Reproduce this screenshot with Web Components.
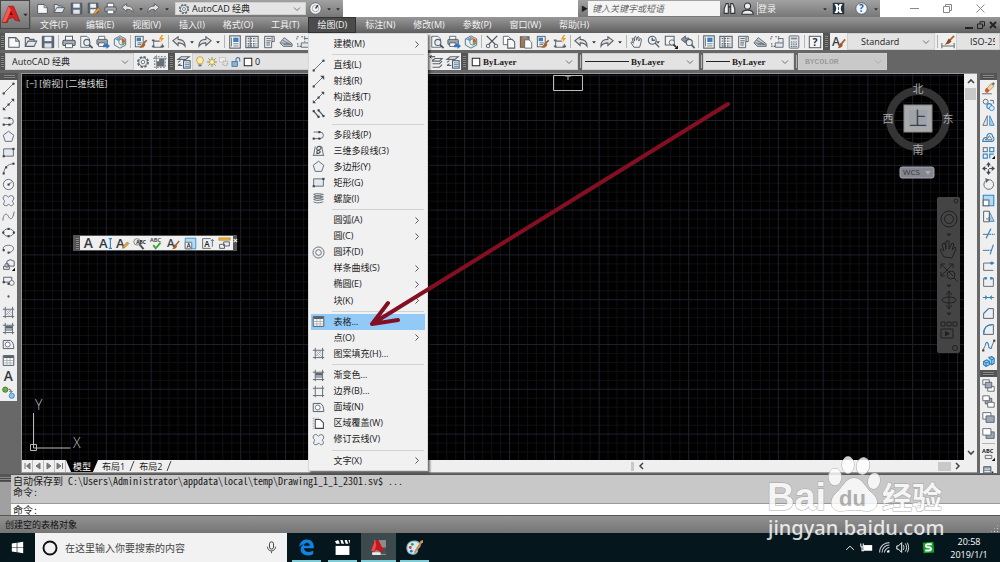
<!DOCTYPE html>
<html lang="zh-CN">
<head>
<meta charset="utf-8">
<title>AutoCAD 经典</title>
<style>
html,body{margin:0;height:100%;background:#686868}
body{font:9px/12px "Open Sans","Noto Sans CJK SC",sans-serif;color:#1a1a1a;overflow:hidden}
</style>
</head>
<body>
<cad-app></cad-app>
<script>
const G='fill="none" stroke="#656d77" stroke-width="1.2"';
const B='fill="none" stroke="#2f86c8" stroke-width="1.4"';
const dot=(x,y,c='#3a4048')=>`<rect x="${x-1.2}" y="${y-1.2}" width="2.6" height="2.6" fill="${c}"/>`;
const T=(s,x,y,z,c='#333',w=400)=>`<text x="${x}" y="${y}" font-size="${z}" fill="${c}" font-weight="${w}" font-family="Open Sans,sans-serif">${s}</text>`;
const ICONS={
 'new':`<path d="M2 3h8l4 4v7H2z" fill="#f8f8f8" stroke="#555e68" stroke-width="1.2"/><path d="M10 3v4h4" ${G}/>`,
 open:`<path d="M1.500 13V3h4l1 2h5v2M1.500 13l3-6h10l-3 6z" fill="#e4e8ec" stroke="#555e68" stroke-width="1.2"/>`,
 save:`<path d="M1.500 1.500h13v13h-13z" fill="#5b6a7b" stroke="#444e5a"/><path d="M4 2h8v5H4z" fill="#eef2f5"/><path d="M4 9.500h8v5H4z" fill="#dfe4e8"/>`,
 saveas:`<path d="M1.500 1.500h12v12h-12z" fill="#5b6a7b" stroke="#444e5a"/><path d="M4 2h7v5H4zM4 9h7v5H4z" fill="#eef2f5"/><path d="M8 15l1-3 5-5 2 2-5 5z" fill="#e8a23a" stroke="#8a5a1a" stroke-width=".6"/>`,
 print:`<path d="M4 6V1.500h8V6" fill="#fff" stroke="#555e68" stroke-width="1.2"/><rect x="1" y="6" width="14" height="6" rx="1.500" fill="#a5acb4" stroke="#4d5660" stroke-width="1.2"/><path d="M4 10h8v4.500H4z" fill="#fff" stroke="#4d5660"/>`,
 preview:`<path d="M2 1.500h7l3 3V14H2z" fill="#f6f6f6" stroke="#59616b"/><circle cx="9" cy="8.500" r="3.500" fill="#e2edf5" stroke="#59616b" stroke-width="1.2"/><path d="M11.500 11l4 4" stroke="#4b535c" stroke-width="2"/>`,
 publish:`<path d="M3 5V1.500h7V5" fill="#fff" stroke="#59616b"/><rect x="1" y="5" width="12" height="6" rx="1" fill="#9aa3ac" stroke="#4d5660"/><path d="M3 9h7v4H3z" fill="#fff" stroke="#4d5660"/><path d="M8 11h4V9l4 3.500-4 3.500v-2H8z" fill="#2f78c8"/>`,
 cube:`<path d="M8 1l6.500 3.500v7L8 15l-6.500-3.500v-7z" fill="#dceef8" stroke="#596873"/><path d="M8 2v6L2 5z" fill="#5aa7d8"/><path d="M8 2v6l6-3z" fill="#e0a44a"/><path d="M2 5l6 3v6z" fill="#fff"/><circle cx="10" cy="8" r="3.500" fill="#f2f2f2" stroke="#777"/><path d="M10 4.500A3.500 3.500 0 0113.500 8H10z" fill="#d9534a"/><path d="M13.500 8a3.500 3.500 0 01-3.500 3.500V8z" fill="#62b04e"/>`,
 match:`<rect x="1.500" y="1.500" width="9" height="12" fill="#eef3f7" stroke="#4f5963"/><rect x="3" y="3" width="5" height="4" fill="#3a7fc0"/><path d="M4 9h5M4 11h4" stroke="#59616b"/><path d="M14.500 6l-4 4" stroke="#9a5a26" stroke-width="2"/><path d="M11 8.500l2 2c-1 4-4 4-7 4 2-1 2-4 5-6z" fill="#a9642c"/>`,
 block:`<path d="M3 7h7M3 7v7h10V10" ${G}/><path d="M1 6h3M1 13h3M11 13h4" stroke="#59616b" stroke-width="2"/><path d="M12 0l-3 5h2.500l-1 4 4.500-5.500h-3l2-3.500z" fill="#eda022"/>`,
 undo:`<path d="M1 6.500L7 2v3c5 0 8 2 8 8-2-3-4-4-8-4v3z" fill="#e2e2e2" stroke="#5b6168" stroke-width="1.200"/>`,
 redo:`<path d="M15 6.500L9 2v3c-5 0-8 2-8 8 2-3 4-4 8-4v3z" fill="#e2e2e2" stroke="#5b6168" stroke-width="1.200"/>`,
 props:`<rect x="2" y="1" width="12" height="14" fill="#f5f7f9" stroke="#4f5963" stroke-width="1.200"/><rect x="6" y="3" width="6" height="5" fill="#3d7fbf"/><path d="M4 3v10M6 10h6M6 12.500h6" stroke="#68727c"/>`,
 design:`<rect x="1" y="1.500" width="14" height="13" fill="#f5f7f9" stroke="#4f5963" stroke-width="1.200"/><path d="M3 4h10M3 7h10M3 10h10M3 12.500h10" stroke="#66707a" stroke-width="1.600" stroke-dasharray="2 1"/><path d="M6 2v12" stroke="#59616b"/>`,
 palette:`<path d="M3 1.500h11v6h-3v7H3z" fill="#e8eaec" stroke="#4f5963"/><path d="M5 4h5M5 6.500h5M5 9h4M5 11.500h4M11.500 2v5" stroke="#67717b" stroke-width="1.200"/>`,
 sheet:`<path d="M1 9l5-6 9 7v3H5z" fill="#c8ced4" stroke="#59616b"/><path d="M2 9l10 1M4 6l10 5M5 11h9" stroke="#68727c"/>`,
 markup:`<path d="M1 5V2h3M6 2h4v6M2 9v4h4" ${G} stroke-dasharray="2 1"/><path d="M6 9h9v5H6zM9 4h6v5" fill="#e4e8ec" stroke="#59616b"/>`,
 calc:`<rect x="2.500" y="1" width="11" height="14" rx="1" fill="#e4e7ea" stroke="#59616b"/><rect x="4.500" y="3" width="7" height="2" fill="#818b95"/><path d="M4.500 8h7M4.500 10.500h7M4.500 13h7" stroke="#66707a" stroke-width="1.400" stroke-dasharray="1.600 1"/>`,
 help:`<rect x="1.500" y="1.500" width="13" height="13" fill="#f6f6f6" stroke="#59616b" stroke-width="1.200"/>`+T('?',5,13,12,'#25313d',700),
 qmark:`<circle cx="8" cy="8" r="7" fill="#f1f6fb" stroke="#4b5764"/>`+T('?',5,12.5,12,'#2166b0',700),
 cut:`<path d="M2 1l10 10M14 1L4 11" stroke="#4b535c" stroke-width="1.600"/><circle cx="3.500" cy="12.500" r="2" ${G}/><circle cx="12.500" cy="12.500" r="2" ${G}/>`,
 copydoc:`<path d="M1.500 1.500h6l2 2V11h-8z" fill="#fff" stroke="#59616b"/><path d="M6.500 5h5l3 3v7h-8z" fill="#f8f8f8" stroke="#59616b" stroke-width="1.200"/>`,
 paste:`<rect x="1.500" y="2" width="10" height="12" fill="#a07a58" stroke="#5a4a3d"/><rect x="4" y="1" width="5" height="3" fill="#8a929a"/><path d="M6.500 5.500h5l3 3v6.500h-8z" fill="#fff" stroke="#59616b"/>`,
 pan:`<path d="M4.500 14L1 8.500c1-1.500 2 0 3 1L2.500 4c1-1.500 2 0 2.500 3l.5-5c1-1.300 2 0 2 4l1.500-4c1.500-.5 1.500 1 1 5l2-3c1.500 0 1 2 .5 4.500L11 14z" fill="#f3f3f3" stroke="#59616b" stroke-width="1.100"/>`,
 zoomrt:`<circle cx="6" cy="6" r="4.500" fill="#e8f0f5" stroke="#59616b" stroke-width="1.200"/><path d="M6 3v3h3M9 9l5 5" fill="none" stroke="#59616b" stroke-width="1.600"/><path d="M10 7h5l-2.500 3z" fill="#59616b"/>`,
 zoomwin:`<path d="M1.500 1.500h10v10h-10z" fill="#f4f4f4" stroke="#59616b" stroke-width="1.200"/><circle cx="9" cy="8.500" r="3" fill="#e8f0f5" stroke="#59616b"/><path d="M11 11l3 3" stroke="#333" stroke-width="2"/><path d="M16 12v4h-4z" fill="#111"/>`,
 zoomprev:`<path d="M0 5l5-4v2.500h4v3H5V9z" fill="#8a949e" stroke="#59616b"/><circle cx="9.500" cy="8.500" r="3.500" fill="#e8f0f5" stroke="#59616b" stroke-width="1.200"/><path d="M12 11l3.500 4" stroke="#59616b" stroke-width="2"/>`,
 gear:`<circle cx="8" cy="8" r="5.500" fill="#f5f5f5" stroke="#5e6871" stroke-width="2.600" stroke-dasharray="2.600 1.700"/><circle cx="8" cy="8" r="4.800" fill="#eceff1" stroke="#5e6871"/><circle cx="8" cy="8" r="2" fill="#fff" stroke="#5e6871"/>`,
 wsgear:`<path d="M2 2h12v12H2z" ${G} stroke-dasharray="2 1.500"/><path d="M4 13V7h3V4h6v9z" fill="#66707c"/><path d="M0 4h16M4 0v16" stroke="#777" stroke-width=".7"/>`,
 layers:`<path d="M1 5l4-3h9l-4 3zM1 8.500l3-2M1 12l3-2M1 12h5" fill="#f4f4f4" stroke="#59616b" stroke-width="1.200"/><rect x="7.500" y="6.500" width="7.500" height="8.500" fill="#eef2f5" stroke="#4d5660" stroke-width="1.200"/><path d="M9 9h5M9 11h5M9 13h5" stroke="#417fb5"/>`,
 layerprev:`<path d="M4 6l3-2h8l-3 3H4zM4 10h8l3-3M4 14h8l3-3" fill="none" stroke="#59616b" stroke-width="1.300"/><path d="M7 2H1M3 0L1 2l2 2" stroke="#222" fill="none"/>`,
 bulb:`<path d="M5 11c0-2-2.500-3-2.500-6a5.500 5.500 0 0111 0c0 3-2.500 4-2.500 6z" fill="#ffe9a0" stroke="#a08232"/><path d="M5.500 12h5v3h-5z" fill="#68727c"/>`,
 sun:`<path d="M8 0v16M0 8h16M2 2l12 12M14 2L2 14" stroke="#8d8249" stroke-width="1.300"/><circle cx="8" cy="8" r="4" fill="#fff0a8" stroke="#9a8330"/>`,
 freeze:`<rect x="1" y="1" width="9" height="7" fill="#eee" stroke="#bbb"/><circle cx="10" cy="10" r="4" fill="#ddd" stroke="#b0b0b0" stroke-width="2" stroke-dasharray="2 1"/>`,
 lock:`<path d="M8 7V4a3 3 0 016 0v3" fill="none" stroke="#50749a" stroke-width="1.800"/><rect x="1.500" y="7" width="9" height="8" fill="#7fb4e0" stroke="#36597c"/>`,
 swatch:`<rect x="2" y="2" width="12" height="12" fill="#fff" stroke="#222" stroke-width="1.600"/>`,
 textstyle:T('A',0,12,14,'#38424c',600)+`<path d="M15 5l-5 6" stroke="#a9642c" stroke-width="2"/><path d="M9.500 9l3 2c-1 3-3 4-6 4 2-2 1-4 3-6z" fill="#a35c28"/>`,
 dimstyle:`<path d="M1 9v6M15 9v6M1 12.500h14" ${G}/><path d="M15 1L9 7" stroke="#a9642c" stroke-width="2"/><path d="M9 4l3 3c-2 3-4 3-8 4 3-2 3-5 5-7z" fill="#8a4c25"/>`,
 line:`<path d="M2 14L14 2" ${G}/>${dot(2,14)}${dot(14,2)}`,
 xline:`<path d="M2 14L14 2" ${G}/><path d="M11 1h4v4zM5 15H1v-4z" fill="#444b53"/>${dot(8,8)}`,
 ray:`<path d="M2 14L14 2" ${G}/><path d="M10 1h5v5z" fill="#444b53"/>${dot(2,14)}`,
 mline:`<path d="M2 5l6 7M8 4l6 7" stroke="#59616b" stroke-width="1.500"/>${dot(2,5)}${dot(8,4)}${dot(14,11)}${dot(8,12)}`,
 pline:`<path d="M2 5h8a4 4 0 010 8H2" ${G}/>${dot(2,13)}${dot(9,5)}${dot(9,13)}`,
 pline3:`<path d="M2 14L4 3M14 14L12 3M1 14h14" ${G}/><path d="M5 12c5 0 7-3 3-4s-2-5 1-5 3 3 0 4-5 3-1 5" fill="none" stroke="#4d555d" stroke-width="1.400"/>`,
 polygon:`<path d="M8 1.500l6.500 5L12 14H4L1.500 6.500z" fill="#eceff3" stroke="#656d77" stroke-width="1.200"/>`,
 rect:`<path d="M2 3.500h12v9H2z" fill="#e4e8ee" stroke="#656d77" stroke-width="1.200"/>${dot(2,12.5)}${dot(14,3.5)}`,
 arc:`<path d="M2 14C3 6 7 3 14 2" ${G}/>${dot(2,14)}${dot(5,6.5)}${dot(14,2)}`,
 circle:`<circle cx="8" cy="8" r="6.300" fill="#f1f2f4" stroke="#656d77" stroke-width="1.200"/><path d="M8 8l4-3" ${G}/>${dot(8,8)}`,
 cloud:`<path d="M3 8C0 6 1.500 1 5.500 2 7 3 7.500 4 8 4c1-2.500 6-3 6.500 1 0 2-1.500 3-2 4 2 1 2.500 5-1 5.500-2 0-2.500-2-3.500-2-1 2-5.500 3-6 0 0-2 1.500-2.500 1-4.500z" fill="#eceff3" stroke="#656d77" stroke-width="1.200"/>`,
 spline:`<path d="M1 13C2 3 6 4 8 8s5 5 7-6" ${G}/>`,
 ellipse:`<ellipse cx="8" cy="8" rx="6.500" ry="4.500" fill="#f4f4f4" stroke="#656d77" stroke-width="1.200"/>${dot(8,3.5)}${dot(8,12.5)}${dot(1.5,8)}${dot(14.5,8)}`,
 earc:`<path d="M2 10C0 6 4 4 8 4s7 2 6 5-4 4-6 4" ${G}/>${dot(8,13)}${dot(2,10)}`,
 insert:`<path d="M2 10v4h7v-4zM6 8V4l4-2 5 2v6h-5z" fill="#eceff3" stroke="#59616b" stroke-width="1.200"/><circle cx="6" cy="9" r="2.500" ${G}/><path d="M16 12v4h-4z" fill="#111"/>`,
 make:`<path d="M2 4h10v6H2z" fill="#eceff3" stroke="#59616b" stroke-width="1.200"/><circle cx="12" cy="11" r="3" fill="#f2f2f2" stroke="#59616b"/>${dot(2,10)}${dot(8,12)}`,
 point:`<circle cx="8" cy="8" r="1.400" fill="#555"/>`,
 hatch:`<path d="M4 1v14M1 4h14M1 13h14M13 1v14" ${G}/><path d="M5 5l7 7M5 8l4 4M8 5l4 4M5 11l6-6" stroke="#a0a8b0"/>`,
 gradient:`<path d="M4 5h9v3H4z" fill="#59616b"/><path d="M4 8h9v3H4z" fill="#a0a7af"/><path d="M4 1v14M1 4h14M1 13h14M13 1v14" ${G}/>`,
 boundary:`<path d="M4 1v14M1 4h14M1 13h14M13 1v14" ${G}/>`,
 region:`<path d="M1.500 3h9c3 2 4 5 4 10h-13z" fill="#eceff3" stroke="#59616b" stroke-width="1.200"/><circle cx="7" cy="8" r="3" fill="#fff" stroke="#59616b"/>`,
 table:`<path d="M1.500 2h13v12h-13z" fill="#fff" stroke="#4d5660" stroke-width="1.200"/><path d="M2 2h12v3H2z" fill="#59616b"/><path d="M2 8h12M2 11h12M6 5v9M10 5v9" stroke="#a0a7ae"/>`,
 mtext:T('A',2,14,17,'#333a42',600),
 addsel:`<circle cx="4" cy="4.500" r="3.200" fill="#69ad42" stroke="#3c7423"/><circle cx="12" cy="12" r="3.200" fill="#8cc8ef" stroke="#3383bb"/><path d="M8 4c3 0 3 1 3 3M9 6l2 2 2-2" fill="none" stroke="#333"/>`,
 helix:`<path d="M2 3c4 3 12 0 12 0M2 6c4 3 12 0 12 0M2 9c4 3 12 0 12 0M2 12c4 3 12 0 12 0M2 3c4-2 12 0 12 0M2 6c4-2 12 0 12 0M2 9c4-2 12 0 12 0" ${G}/>`,
 donut:`<circle cx="8" cy="8" r="6.800" ${G}/><circle cx="8" cy="8" r="3.500" ${G}/>`,
 wipe:`<path d="M4 3h6l4 4v7H4z" fill="#fff" stroke="#3d454d" stroke-width="1.300"/><path d="M1.500 1.500v13M1.500 1.500h8" stroke="#888" stroke-dasharray="1 1"/>`,
 erase:`<path d="M15 1L8 8" stroke="#777" stroke-width="3"/><path d="M11 2l4 3-6 6-3-3z" fill="#f0d49c" stroke="#8a7a60" stroke-width=".7"/><path d="M6 7l3 3c-1 4-4 4-5 2s0-4 2-5z" fill="#d8572d"/><path d="M0 14.500h12" ${G}/>`,
 copy:`<circle cx="4.500" cy="4.500" r="3" ${G}/><circle cx="9" cy="10" r="3" ${B}/><circle cx="12" cy="12.500" r="3" fill="#dcecf8" stroke="#2f86c8"/><path d="M10 3h4v4" ${G}/>`,
 mirror:`<path d="M6.500 2v12H1z" fill="#e4e8ec" stroke="#59616b"/><path d="M9.500 2v12H15z" fill="#a8d0ee" stroke="#2f86c8"/>`,
 offset:`<path d="M1 14c0-4 3-5 5-5 0-6 7-6 7-1 3 2 2 6-1 6z" ${B}/><path d="M4 12h8c1-2-1-2-2-3 0-3-2-2-2 0 0 2-3 1-4 3z" ${G}/>`,
 array:`<rect x="1.500" y="2" width="5" height="5" ${G}/><rect x="9.500" y="2" width="5" height="5" ${B}/><rect x="1.500" y="10" width="5" height="5" ${B}/><path d="M9.500 15v-5h5" ${B}/><path d="M16 12v4h-4z" fill="#111"/>`,
 move:`<path d="M8 2v12M2 8h12" stroke="#444b53" stroke-width="1.500" stroke-dasharray="4 3"/><path d="M8 0l3 4H5zM8 16l3-4H5zM0 8l4-3v6zM16 8l-4-3v6z" fill="#444b53"/>`,
 rotate:`<path d="M5 3a6 6 0 103-1" ${G}/><path d="M4 0l5 2-4 4z" fill="#59616b"/>`,
 scale:`<path d="M1.500 1.500h13v13h-13z" fill="#b3dbf3" stroke="#2f86c8" stroke-width="1.300"/><path d="M1.500 7.500h7v7h-7z" fill="#fff" stroke="#59616b" stroke-width="1.300"/>`,
 stretch:`<path d="M9 2l6 12H9z" fill="#a8d0ee" stroke="#2f86c8"/><path d="M2 1.500h7v13H2z" fill="#f5f5f5" stroke="#59616b" stroke-width="1.200"/><path d="M5 11h5M8 9l2 2-2 2" ${G}/>`,
 trim:`<path d="M5 14L11 2" ${B}/><path d="M1 9h7" ${G}/><path d="M9 9h7" ${B} stroke-dasharray="2 1"/>`,
 extend:`<path d="M10 14L14 2" ${B}/><path d="M1 9h6" ${G}/><path d="M7 9h5" ${B} stroke-dasharray="2 1"/>`,
 breakpt:`<path d="M2 14V5h9M2 14h12" ${G}/><path d="M10 5h5" ${B}/><circle cx="12" cy="5" r="2" fill="#2f86c8"/>`,
 brk:`<path d="M5 4H2v10h12V4h-3" ${G}/><path d="M3 4h3M10 4h3" fill="none" stroke="#2f86c8" stroke-width="3"/>`,
 join:`<path d="M1 8h14" ${G}/><path d="M4 5l3 3-3 3zM12 5L9 8l3 3z" fill="#2f86c8"/>`,
 chamfer:`<path d="M2 14V8l6-6h6v12z" fill="#eceff3" stroke="#59616b" stroke-width="1.200"/><path d="M2 8l6-6" ${B}/>`,
 fillet:`<path d="M2 14c0-8 3-12 12-12v12z" fill="#eceff3" stroke="#59616b" stroke-width="1.200"/><path d="M2 14C2 6 5 2 13 2" ${B}/>`,
 blend:`<path d="M1 14l3-6M15 2l-3 7" ${G}/><path d="M4 8C5 1 8 5 8 8s4 6 4 1" ${B}/>${dot(1.500,14)}${dot(15,2)}`,
 explode:`<path d="M2 8l4-2 3 2v4l-4 2-3-2zM8 3l4-1 3 2v6l-3 2-3-2" fill="#a8d0ee" stroke="#2578b4" stroke-width="1.300"/><path d="M2 8l3 2 4-2M5 10v4M8 3l4 3 3-2M12 6v6" ${B}/>`,
 front:`<path d="M1 1h8v6H1zM7 9h8v6H7z" fill="#fff" stroke="#4d5660"/><path d="M4 4h8v7H4z" fill="#9fa9b6" stroke="#4d5660"/>`,
 back:`<path d="M4 4h8v7H4z" fill="#9fa9b6" stroke="#4d5660"/><path d="M1 1h8v6H1zM7 9h8v6H7z" fill="#fff" stroke="#4d5660"/>`,
 above:`<path d="M1 2h10v8H1z" fill="#fff" stroke="#4d5660"/><path d="M5 6h10v8H5z" fill="#9fa9b6" stroke="#4d5660"/>`,
 under:`<path d="M5 6h10v8H5z" fill="#9fa9b6" stroke="#4d5660"/><path d="M1 2h10v8H1z" fill="#fff" stroke="#4d5660"/>`,
 abcfront:T('ABC',0,6,7,'#222',700)+`<path d="M4 9h8v4H4z" ${G}/><path d="M16 12v4h-4z" fill="#111"/>`,
 hatchback:`<path d="M2 2h9v11H2z" fill="#8c99a8" stroke="#4d5660"/><path d="M3 5h7M3 8h7" stroke="#fff"/><path d="M13 8v5" stroke="#222" stroke-width="2"/>`,
 dtext:T('A',0,14,16,'#333a42',600)+`<path d="M14 2v12M12 2h4M12 14h4" ${B}/>`,
 edittext:T('A',0,14,16,'#333a42',600)+`<path d="M8 14l1-3 5-5 2 2-5 5z" fill="#e8a23a" stroke="#8a5a1a" stroke-width=".6"/>`,
 find:`<circle cx="5" cy="6" r="4" fill="#e3efe9" stroke="#68757c"/><path d="M8 9l5 6" stroke="#4b535c" stroke-width="2.500"/>`+T('ABC',4,8,6,'#222',700),
 spell:T('ABC',0,6,7,'#333',600)+`<path d="M4 10l3 4 6-7" fill="none" stroke="#39a335" stroke-width="2.200"/>`,
 scaletext:`<path d="M1.500 1.500h13v13h-13z" fill="#b3dbf3" stroke="#2f86c8"/><path d="M1.500 6.500h8v8h-8z" fill="#fff" stroke="#59616b"/>`+T('A',3,13.5,8,'#222',600),
 justify:`<path d="M12 14H2V2h10" ${G}/>`+T('A',4,12,10,'#222',600)+`<path d="M14 3v9M12 5l2-2 2 2" ${G}/>`,
 convert:`<path d="M1 1h14v3H1z" fill="#f0b43c" stroke="#a87820" stroke-width=".7"/><path d="M2 9h6v5H2zM7 6h7v5H7z" fill="#eceff3" stroke="#59616b" stroke-width="1.200"/>`,
 bino:`<path d="M1.500 14V8L4 2h2.500v12zM14.500 14V8L12 2H9.500v12z" fill="#f0f0f0" stroke="#30353a" stroke-width="1.300"/><path d="M6.500 6h3" stroke="#30353a" stroke-width="2"/>`,
 user:`<circle cx="8" cy="5" r="3.800" fill="#eee" stroke="#30353a" stroke-width="1.300"/><path d="M1 15c0-4 3-5 7-5s7 1 7 5z" fill="#eee" stroke="#30353a" stroke-width="1.300"/>`,
 xchg:`<path d="M1 1h14v14H1z" fill="#24313f"/><path d="M3 2.500c3 4 3 7 0 11h3.500L8 11l1.500 2.500H13c-3-4-3-7 0-11H9.500L8 5 6.500 2.500z" fill="#fff"/><path d="M8 6v4" stroke="#24313f"/>`,
 compass:`<circle cx="8" cy="8" r="7" fill="#f3f4f5" stroke="#59616b"/><circle cx="8" cy="8" r="4" fill="none" stroke="#999"/><path d="M8 8l3-4" stroke="#333" stroke-width="1.600"/>`,
 logo:`<path d="M1 14L6 1h4l5 12-4-1-1-2-4 1-1 3z" fill="#d92222" stroke="#861014" stroke-width=".5"/><path d="M6 1L1 14l3-1 4-9z" fill="#f15b50"/><path d="M7 8l1-3 1.500 3z" fill="#580d0d"/>`,
 win:`<path d="M1 3.200l6-.9v5.300H1zM7.800 2.200L15 1v6.600H7.800zM1 8.400h6v5.300l-6-.9zM7.800 8.400H15V15l-7.200-1.100z" fill="#fff"/>`,
 cortana:`<circle cx="8" cy="8" r="6.500" fill="none" stroke="#111" stroke-width="1.900"/>`,
 mic:`<rect x="5.500" y="1" width="5" height="9" rx="2.500" fill="none" stroke="#444" stroke-width="1.200"/><path d="M3 7c0 7 10 7 10 0M8 12.500V15" fill="none" stroke="#444" stroke-width="1.100"/>`,
 edge:`<path d="M1 7.500C2 2 5.500.5 8.300.5c4.200 0 6.900 3 6.700 8.300H5.500c.2 3.700 5.600 4.200 8.700 2.300v3.200c-5 2.500-11.700 1-11.700-4.600 0-2.500 1.500-4.200 3.500-5C4 5 2 6 1 7.500zM5.600 6.300h5.500C11 2.500 6 2.700 5.600 6.300z" fill="#0c84e0"/>`,
 clap:`<path d="M1.500 6.500h13v8.500h-13z" fill="#fff"/><path d="M1 2l3-1 1.500 3.500H2zM6 1h2l1.500 3.500H7zM10 1h2l1.500 3.500H11zM13.500 1H15v3.500z" fill="#fff"/>`,
 acad:`<path d="M4 1h11v14H4z" fill="#8d8d8d"/><path d="M9 8h6v6H9z" fill="#4c4c4c"/><path d="M1 11L5 1h3l5 10-3 1-4-2-2 2z" fill="#c8151c"/><path d="M5 1L1 11l3 1 2-6z" fill="#ee4a44"/><path d="M2 12.500h8V15H2z" fill="#eee"/>`,
 paint:`<path d="M1 10C0 5 4 1 9 2s5 5 3 6 0 3-2 5-8 2-9-3z" fill="#d7e9f4" stroke="#80b0cc"/><circle cx="4" cy="8" r="1.300" fill="#d23b2d"/><circle cx="6" cy="5" r="1.300" fill="#3d9c3a"/><circle cx="5" cy="11.500" r="1.300" fill="#2878c8"/><path d="M15 2L8 13" stroke="#d48b3a" stroke-width="1.800"/><path d="M13 2l3-1v3z" fill="#cf9b56"/>`,
 chevup:`<path d="M2 11l6-6 6 6" fill="none" stroke="#fff" stroke-width="1.500"/>`,
 battery:`<path d="M4 5h11v7H4z" fill="#fff"/><path d="M1 3v3c0 2 3 2 3 0V3M2.500 7v5H5" fill="none" stroke="#fff" stroke-width="1.300"/>`,
 wifi:`<path d="M2 14C2 6 8 2 14 2M5 14c0-5 4-9 9-9M8 14c0-3 3-6 6-6" fill="none" stroke="#ccd" stroke-width="1.300"/><path d="M11 14c0-2 1-3 3-3v3z" fill="#fff"/>`,
 sound:`<path d="M1 6h2l4-4v12l-4-4H1z" fill="none" stroke="#fff" stroke-width="1.200"/><path d="M9 5c1 2 1 4 0 6M11.500 3c2 3 2 7 0 10M14 2c2 4 2 8 0 12" fill="none" stroke="#fff"/>`,
 sogou:`<path d="M1 2l13-1 1 13-13 1z" fill="#12a32a"/><path d="M12 4H7c-3 0-3 3.500 0 3.700h2c3 0 3 4-.500 4H4" fill="none" stroke="#fff" stroke-width="2.200"/>`,
 tri:`<path d="M3 6h10l-5 6z" fill="#2b2b2b"/>`,
 down:`<path d="M2 5l6 6 6-6" fill="none" stroke="#555" stroke-width="1.600"/>`
};

/* Registers an element whose shadow root is cloned from a template. */
function define(name, render){
  customElements.define(name, class extends HTMLElement{
    constructor(){ super(); this.attachShadow({mode:'open'}); }
    connectedCallback(){
      const t=document.createElement('template');
      t.innerHTML=render(this);
      this.shadowRoot.replaceChildren(t.content.cloneNode(true));
    }
  });
}
const BTN='button{all:unset;box-sizing:border-box;display:flex;align-items:center;justify-content:center;cursor:default}';

define('cad-icon', e=>`<style>:host{display:inline-flex;flex:none;width:var(--icon,14px);height:var(--icon,14px)}svg{width:100%;height:100%;overflow:visible}</style>
<svg viewBox="0 0 16 16" aria-hidden="true">${ICONS[e.getAttribute('name')]||''}</svg>`);

define('tool-button', e=>`<style>:host{display:flex;flex:none;width:17px;justify-content:center}:host([small]){width:9px;--icon:6px}${BTN}button{width:100%;height:100%}</style>
<button aria-label="${e.getAttribute('name')}"><cad-icon name="${e.getAttribute('name')}"></cad-icon></button>`);

define('tool-grip', e=>`<style>:host{display:flex;flex:none;width:7px;align-self:stretch;background:#555;align-items:center;justify-content:center}i{width:3px;height:11px;background:repeating-linear-gradient(#888 0 1px,#484848 1px 2px)}
:host([flat]){width:auto;height:7px}:host([flat]) i{width:11px;height:4px}</style><i></i>`);

define('tool-sep', e=>`<style>:host{display:flex;flex:none;width:4px;justify-content:center;align-items:stretch}i{width:1px;background:#b4b4b4;margin:2px 0}:host([flat]){width:auto;height:5px}:host([flat]) i{width:13px;height:1px;margin:2px auto}</style><i></i>`);

/* Drop-down list with an optional slotted swatch before the value. */
define('tool-select', e=>`<style>:host{display:flex;min-width:0;box-sizing:border-box;background:#e3e3e3;border:1px solid #cfcfcf;--icon:10px}
label{display:flex;flex:1;align-items:center;min-width:0;padding:0 4px 0 6px;gap:2px}:host([swatch]) label{padding-left:2px}:host([wide]) label{padding-left:13px}
select{all:unset;flex:1;min-width:0;font:inherit;white-space:nowrap;overflow:hidden}
.c{--icon:8px;display:flex}:host([disabled]){background:#c9c9c9;color:#888}:host([disabled]) .c{opacity:.3}</style>
<label><slot></slot><select aria-label="${e.getAttribute('label')}" ${e.hasAttribute('disabled')?'disabled':''}><option>${e.getAttribute('value')}</option></select>${e.hasAttribute('nochev')?'':'<span class="c"><cad-icon name="down"></cad-icon></span>'}</label>`);

define('tool-strip', e=>`<style>:host{display:flex;flex:none;height:17px;background:#efefef}:host([vertical]){flex-direction:column;height:auto;width:17px}
:host([vertical]) ::slotted(tool-button){flex:1 1 0;min-height:0}</style><slot></slot>`);

const btns=s=>s.split(' ').map(n=>n==='|'?'<tool-sep></tool-sep>':n==='v'?'<tool-button small name="tri"></tool-button>':`<tool-button name="${n}"></tool-button>`).join('');

define('menu-entry', e=>`<style>:host{display:flex;flex:3 1 0;min-height:0;margin:0 2px}${BTN}
button{flex:1;justify-content:flex-start;padding-right:6px}:host([active]) button{background:#91c9f7}
.i{width:22px;display:flex;padding-left:1px;box-sizing:border-box;--icon:13px}.t{flex:1}svg{width:4px;height:7px}</style>
<button role="menuitem"><span class="i">${e.hasAttribute('icon')?`<cad-icon name="${e.getAttribute('icon')}"></cad-icon>`:''}</span><span class="t"><slot></slot></span>${e.hasAttribute('sub')?'<svg viewBox="0 0 4 7"><path d="M.5.5l3 3-3 3" fill="none" stroke="#555"/></svg>':''}</button>`);

define('menu-line', e=>`<style>:host{display:flex;flex:1 1 0;align-items:center;margin:0 3px 0 23px}i{flex:1;height:1px;background:#d2d2d2}</style><i></i>`);

define('draw-menu', e=>{
 const rows=[['建模(M)','',1],0,['直线(L)','line'],['射线(R)','ray'],['构造线(T)','xline'],['多线(U)','mline'],0,['多段线(P)','pline'],['三维多段线(3)','pline3'],['多边形(Y)','polygon'],['矩形(G)','rect'],['螺旋(I)','helix'],0,['圆弧(A)','',1],['圆(C)','',1],['圆环(D)','donut'],['样条曲线(S)','',1],['椭圆(E)','',1],['块(K)','',1],0,['表格...','table',0,1],['点(O)','',1],['图案填充(H)...','hatch'],0,['渐变色...','gradient'],['边界(B)...','boundary'],['面域(N)','region'],['区域覆盖(W)','wipe'],['修订云线(V)','cloud'],0,['文字(X)','',1]];
 return `<style>:host{display:flex;flex-direction:column;box-sizing:border-box;width:120px;height:438px;padding:2px 0 1px;background:#f1f1f1;border:1px solid #d8d8d8;box-shadow:2px 2px 2px #0008;color:#1b1b1b}</style>`+
 rows.map(r=>r?`<menu-entry ${r[1]?`icon="${r[1]}"`:''} ${r[2]?'sub':''} ${r[3]?'active':''}>${r[0]}</menu-entry>`:'<menu-line></menu-line>').join('');
});

define('title-bar', e=>`<style>:host{display:flex;height:17px;background:#fff;align-items:stretch;--icon:13px}
.q,.s{display:flex;align-items:center;background:linear-gradient(#a2a2a2,#777);padding-left:3px}.q{width:312px;box-sizing:border-box}.q tool-button,.s tool-button{align-self:stretch}
.space{flex:1}.ws{width:131px;height:13px;background:#e4e4e4;--icon:12px;margin:0 1px 0 4px}
.s{width:302px;box-sizing:border-box;gap:1px}.s b{width:6px;font-size:7px;font-weight:400}
input{all:unset;width:128px;height:15px;padding-left:4px;background:#f4f4f4;font-style:italic;color:#555}input::placeholder{color:#666;opacity:1}
a{color:#f1f1f1;text-decoration:none;flex:1;white-space:nowrap}a span{border-left:1px solid #ccc}
.w{display:flex;width:120px;box-sizing:border-box;justify-content:flex-end;gap:24px;padding-right:15px;align-items:center;flex:none}.w button{all:unset;display:flex}.w svg{width:9px;height:9px}</style>
<div class="q">${btns('new open save saveas print undo v redo v')}
<tool-select class="ws" label="工作空间" value="AutoCAD 经典" swatch><cad-icon name="gear"></cad-icon></tool-select>${btns('compass v v')}</div>
<div class="space"></div>
<div class="s"><b>▶</b><input aria-label="搜索" placeholder="键入关键字或短语">${btns('bino user')}<a href="#login"><span>登录</span></a>${btns('v xchg | qmark v')}</div>
<div class="w"><button aria-label="最小化"><svg viewBox="0 0 9 9"><path d="M0 4.500h9" stroke="#888"/></svg></button><button aria-label="还原"><svg viewBox="0 0 9 9"><path d="M.5 2.500h6v6h-6zM2.500 2.500v-2h6v6h-2" fill="none" stroke="#888"/></svg></button><button aria-label="关闭"><svg viewBox="0 0 9 9"><path d="M.5.500l8 8M8.500.500l-8 8" stroke="#888"/></svg></button></div>`);

define('menu-bar', e=>`<style>:host{display:flex;height:16px;background:linear-gradient(#989898,#5f5f5f);color:#f3f3f3}
nav{display:flex;flex:1}nav>div{position:relative;display:flex}${BTN}nav button{padding:0 9px;white-space:nowrap}.on button{background:#4b4b4b;box-shadow:inset 0 0 0 1px #333}
draw-menu{position:absolute;top:100%;left:0;z-index:20}
.w{display:flex;gap:4px;align-items:center;padding-right:3px}.w svg{width:8px;height:8px}</style>
<nav role="menubar">${['文件(F)','编辑(E)','视图(V)','插入(I)','格式(O)','工具(T)','绘图(D)','标注(N)','修改(M)','参数(P)','窗口(W)','帮助(H)'].map(t=>`<div ${t==='绘图(D)'?'class="on"':''}><button role="menuitem">${t}</button>${t==='绘图(D)'?'<draw-menu role="menu"></draw-menu>':''}</div>`).join('')}</nav>
<div class="w"><button aria-label="最小化"><svg viewBox="0 0 8 8"><path d="M0 7h8" stroke="#222" stroke-width="2"/></svg></button><button aria-label="还原"><svg viewBox="0 0 8 8"><path d="M.5 3h5v4.500h-5zM3 3V.700h4.500V5H6" fill="none" stroke="#222"/></svg></button><button aria-label="关闭"><svg viewBox="0 0 8 8"><path d="M1 1l6 6M7 1L1 7" stroke="#222" stroke-width="1.800"/></svg></button></div>`);

define('app-header', e=>`<style>:host{display:flex;flex:none}.l{width:31px;height:33px;box-sizing:border-box;background:linear-gradient(#999,#5f5f5f)}
${BTN}button{width:30px;height:29px;background:linear-gradient(#a6a6a6,#727272);box-shadow:inset 0 0 0 1px #484848;gap:1px;--icon:20px}button span{--icon:7px;display:flex}.r{flex:1;min-width:0}</style>
<div class="l"><button aria-label="应用程序菜单"><cad-icon name="logo"></cad-icon><span><cad-icon name="tri"></cad-icon></span></button></div><div class="r"><title-bar></title-bar><menu-bar></menu-bar></div>`);

const STD='new open save | print preview publish cube | ';
define('tool-rows', e=>`<style>:host{display:flex;flex-direction:column;gap:3px;padding-bottom:3px;flex:none;background:#666}
.r{display:flex;height:17px;overflow:hidden}.g{background:#efefef;display:flex}tool-grip.n{width:5px}
.ws{width:129px}.st{width:88px}.iso{flex:1;min-width:42px}.lay{width:218px}.lt{font-family:"Liberation Serif",serif;font-weight:700}.by{font:8px/12px "Liberation Mono",monospace}
.col{width:110px}.ltp{width:117px}.lw{width:91px}.byc{width:89px}svg{width:44px;height:9px;flex:none}.lw svg{width:24px}</style>
<div class="r"><tool-grip class="n"></tool-grip><tool-strip>${btns(STD+'match block | undo v redo v | props design palette sheet markup calc | block')}</tool-strip>
<tool-grip></tool-grip><tool-strip>${btns(STD+'cut copydoc paste match block | undo v redo v | pan zoomrt zoomwin zoomprev | props design palette sheet markup calc | help')}</tool-strip>
<tool-grip></tool-grip><div class="g">${btns('textstyle')}<tool-select class="st" wide label="文字样式" value="Standard"></tool-select><tool-sep></tool-sep>${btns('dimstyle')}</div><tool-select class="iso" wide nochev label="标注样式" value="ISO-25"></tool-select></div>
<div class="r"><tool-grip class="n"></tool-grip><tool-select class="ws" label="工作空间" value="AutoCAD 经典"></tool-select><tool-strip>${btns('gear wsgear')}</tool-strip>
<tool-grip></tool-grip><tool-strip>${btns('layers')}</tool-strip><tool-select class="lay" swatch label="图层" value="0"><cad-icon name="bulb"></cad-icon><cad-icon name="sun"></cad-icon><cad-icon name="freeze"></cad-icon><cad-icon name="lock"></cad-icon><cad-icon name="swatch"></cad-icon></tool-select>
<tool-strip>${btns('layers layerprev layers')}</tool-strip><tool-grip></tool-grip>
<tool-select class="col lt" swatch label="颜色" value="ByLayer"><cad-icon name="swatch"></cad-icon></tool-select><tool-sep></tool-sep>
<tool-select class="ltp lt" swatch label="线型" value="ByLayer"><svg viewBox="0 0 44 9"><path d="M0 4.500h44" stroke="#222"/></svg></tool-select><tool-sep></tool-sep>
<tool-select class="lw lt" swatch label="线宽" value="ByLayer"><svg viewBox="0 0 24 9"><path d="M0 4.500h24" stroke="#222"/></svg></tool-select><tool-sep></tool-sep>
<tool-select class="byc by" disabled label="打印样式" value="BYCOLOR"></tool-select></div>`);

define('text-tools', e=>`<style>:host{display:flex;height:16px;background:#555;border:1px solid #555;box-sizing:border-box;width:164px}tool-grip{width:6px}.x{all:unset;width:5px;font:bold 8px/7px "Liberation Sans",sans-serif;color:#fff;height:8px}tool-button{--icon:13px;height:14px}tool-strip{flex:1;height:14px;justify-content:space-between}</style>
<tool-grip></tool-grip><tool-strip>${btns('mtext dtext edittext find spell textstyle scaletext justify convert')}</tool-strip><button class="x" aria-label="关闭">×</button>`);

define('view-cube', e=>`<style>:host{display:block;width:76px;height:280px}svg{display:block;width:76px;height:280px;overflow:visible}</style>
<svg viewBox="0 0 76 280" font-family="Noto Sans CJK SC,sans-serif">
<circle cx="37" cy="45" r="28" fill="none" stroke="#343434" stroke-width="8"/><rect x="23" y="31" width="28" height="27" fill="#aaa" stroke="#888"/><rect x="28" y="36" width="18" height="17" fill="#9da3aa"/>
<text x="37" y="51" font-size="18" text-anchor="middle" fill="#3f4347">上</text>
<g font-size="11" fill="#aaa" text-anchor="middle"><text x="37" y="19">北</text><text x="37" y="80">南</text><text x="7" y="49">西</text><text x="67" y="49">东</text></g>
<rect x="19" y="93" width="34" height="11" rx="2" fill="#85878f" stroke="#a2a4b2"/><text x="22" y="101" font-size="8" fill="#33363c" font-family="Open Sans">WCS</text><path d="M44 97h6l-3 4z" fill="#a9abb3"/>
<rect x="56" y="123" width="23" height="156" rx="2" fill="#444"/>
<g transform="translate(-1 0)" fill="none" stroke="#202020"><circle cx="76" cy="127" r="2"/><circle cx="69" cy="145" r="8"/><circle cx="69" cy="145" r="4.500"/><path d="M67 160h4l-2 2zM64 183l-4-7c1-2 2 0 4 1l-2-7 3-1 1 6v-8h3v8l3-6 2 1-2 6 3-3 1 2-4 9z"/><path d="M61 190l12 12M73 190l-12 12M61 194v-4h4M69 190h4v4M61 198v4h4"/><circle cx="71" cy="201" r="4"/><path d="M74 204l4 4M67 211h4l-2 2z"/><ellipse cx="69" cy="226" rx="7" ry="3"/><path d="M69 218v16M66 221l3-4 3 4M66 231l3 4 3-4M67 239h4l-2 2zM61 248h4v4h-4zM67 248h4v4h-4zM73 248h4v4h-4zM61 255h12v9H61z"/><circle cx="75" cy="274" r="2.500"/></g><path d="M64 257l5 2.500-5 3z" fill="#202020"/></svg>`);

define('drawing-area', e=>`<style>:host{display:block;position:relative;background:#000;color:#d4d4d4;overflow:hidden}
.grid{position:absolute;inset:0;width:100%;height:100%}.label{position:absolute;left:4px;top:4px;white-space:nowrap}
view-cube{position:absolute;right:7px;top:0}text-tools{position:absolute;left:51px;top:161px}.ucs{position:absolute;left:7px;bottom:0;width:60px;height:60px;overflow:visible}</style>
<svg class="grid"><defs><pattern id="m" x="39" y="46" width="44.800" height="44.800" patternUnits="userSpaceOnUse"><path d="M9.460 0v45M18.420 0v45M27.380 0v45M36.340 0v45M0 9.460h45M0 18.420h45M0 27.380h45M0 36.340h45" stroke="#0f0f13"/><path d="M.5 0v45M0 .500h45" stroke="#1e1f2d"/></pattern></defs><rect width="100%" height="100%" fill="url(#m)"/><path d="M531.500 1.500h29v15h-29zM543 2h6M546 2v4" fill="none" stroke="#bbb"/></svg>
<div class="label">[−] [俯视] [二维线框]</div><text-tools></text-tools>
<svg class="ucs" viewBox="0 0 60 60"><path d="M4.500 13v35h37M1.500 44.500h6v6h-6z" fill="none" stroke="#bbb"/><g font-size="14" font-weight="300" font-family="Open Sans" fill="#bbb"><text x="6" y="10">Y</text><text x="44" y="48">X</text></g></svg>
<view-cube></view-cube>`);

define('model-view', e=>`<style>:host{display:grid;grid-template:1fr 12px / 1fr 13px;border:1px solid #999;border-right:0;min-width:0;min-height:0;background:#efefef;box-sizing:border-box}
.v{display:flex;flex-direction:column;align-items:center;justify-content:space-between;padding:2px 0}.v div{display:flex;flex-direction:column;align-items:center;gap:2px}.v i{width:11px;height:12px;background:#c8c8c8}svg{width:8px;height:10px}
.h{grid-column:1/3;display:flex;align-items:stretch}${BTN}.n button{width:11px;border-right:1px solid #bbb}.n{display:flex}
.t{display:flex}.t button{padding:0 4px;white-space:nowrap;font-size:9px;line-height:11px}.t .on{background:#000;color:#fff;clip-path:polygon(0 0,100% 0,84% 100%,16% 100%);padding:0 7px}.t .e{width:6px;height:12px}
.s{width:331px;display:flex;align-items:center;justify-content:space-between;margin-left:auto;padding-right:15px}.s div{display:flex;align-items:center;gap:3px}.s i{width:13px;height:9px;background:#c8c8c8}.s .p{width:3px}</style>
<drawing-area></drawing-area>
<div class="v"><div><svg viewBox="0 0 8 10"><path d="M1 7l3-3 3 3" fill="none" stroke="#444" stroke-width="1.600"/></svg><i></i></div><svg viewBox="0 0 8 10"><path d="M1 3l3 3 3-3" fill="none" stroke="#444" stroke-width="1.600"/></svg></div>
<div class="h"><div class="n">${['M2 2v6M7 2L3.500 5 7 8z','M6 2L2 5l4 3z','M2 2l4 3-4 3z','M1 2l4 3-4 3zM6.500 2v6'].map((d,i)=>`<button aria-label="布局导航 ${i+1}"><svg viewBox="0 0 8 10"><path d="${d}" fill="#777" stroke="#777"/></svg></button>`).join('')}</div>
<div class="t"><button class="on">模型</button><button>布局1</button><svg class="e" viewBox="0 0 6 12"><path d="M1 11L5 1" stroke="#444"/></svg><button>布局2</button><svg class="e" viewBox="0 0 6 12"><path d="M1 11L5 1" stroke="#444"/></svg></div>
<div class="s"><div><i class="p"></i><svg viewBox="0 0 8 10"><path d="M6 2L3 5l3 3" fill="none" stroke="#444" stroke-width="1.500"/></svg></div><div><i></i><svg viewBox="0 0 8 10"><path d="M2 2l3 3-3 3" fill="none" stroke="#444" stroke-width="1.500"/></svg></div></div></div>`);

define('work-space', e=>`<style>:host{display:flex;flex:1;min-height:0;background:#686868}
.l{width:18px;margin-right:3px;display:flex;flex-direction:column;--icon:13px}.l tool-strip{height:321px}
model-view{flex:1}.r{width:17px;margin:0 3px 0 3px;display:flex;flex-direction:column;overflow:hidden;--icon:13px}.r .a{height:290px}.r .b{height:64px;margin:0}.c{height:34px}</style>
<div class="l"><tool-grip flat></tool-grip><tool-strip vertical>${btns('line xline pline polygon rect arc circle cloud spline ellipse earc insert make point hatch gradient region table mtext addsel')}</tool-strip></div>
<model-view></model-view>
<div class="r"><tool-grip flat></tool-grip><tool-strip class="a" vertical>${btns('erase copy mirror offset array move rotate scale stretch trim extend breakpt brk join chamfer fillet blend explode')}</tool-strip><tool-grip flat></tool-grip><tool-strip class="b" vertical>${btns('front back above under')}</tool-strip><tool-strip vertical><tool-sep flat></tool-sep></tool-strip><tool-strip class="c" vertical>${btns('abcfront hatchback')}</tool-strip></div>`);

define('command-line', e=>`<style>:host{display:grid;grid-template-columns:11px 1fr;flex:none;height:42px;border-top:1px solid #555;border-bottom:1px solid #555;box-sizing:border-box;margin-top:1px;font:10px/11px "Noto Sans Mono CJK SC","Liberation Mono","Noto Sans CJK SC",monospace}
.g{background:#a0a0a0}.b{display:flex;flex-direction:column;min-width:0}.o{flex:1;background:#c8c8c8;padding-left:2px;white-space:pre}label{display:flex;background:#fff;padding-left:2px;height:12px;align-items:center;border-top:1px solid #999;box-sizing:border-box}input{all:unset;flex:1}</style>
<div class="g"><tool-grip flat></tool-grip></div><div class="b"><div class="o"><div>自动保存到 C:\\Users\\Administrator\\appdata\\local\\temp\\Drawing1_1_1_2301.sv$ ...</div><div>命令:</div></div><label>命令:<input></label></div>`);

define('status-bar', e=>`<style>:host{display:flex;flex:none;height:17px;align-items:center;justify-content:space-between;padding:0 1px 0 5px;background:linear-gradient(#929292,#757575);color:#111}i{width:9px;height:9px;align-self:flex-end;background:radial-gradient(circle,#ddd 1px,#0000 1px) 0 0/3px 3px;clip-path:polygon(100% 0,100% 100%,0 100%)}</style><span>创建空的表格对象</span><i></i>`);

define('task-bar', e=>`<style>:host{display:flex;flex:none;height:29px;background:#05171c;color:#fff}${BTN}
.st{width:35px;--icon:13px}label{width:252px;box-sizing:border-box;background:#f2f2f2;display:flex;align-items:center;padding:0 9px 0 7px;gap:7px;--icon:16px}label .m{--icon:13px;display:flex}
input{all:unset;flex:1;font-size:10px;color:#444;min-width:0}input::placeholder{color:#444;opacity:1}
.a{display:flex;padding-left:2px;gap:1px;--icon:17px}.a button{width:35px;background:linear-gradient(#7ccdd8,#7ccdd8) center bottom/29px 2px no-repeat}.a .on{background-color:#3c4a4e;background-size:35px 2px}
.t{margin-left:auto;display:flex;align-items:center;gap:5px;--icon:13px;padding-right:10px}.t .p{--icon:10px;display:flex}.t .z{margin-left:8px;display:flex}.k{margin-left:8px;text-align:center;font-size:9px;line-height:13px;width:42px}</style>
<button class="st" aria-label="开始"><cad-icon name="win"></cad-icon></button>
<label><cad-icon name="cortana"></cad-icon><input aria-label="搜索" placeholder="在这里输入你要搜索的内容"><span class="m"><cad-icon name="mic"></cad-icon></span></label>
<div class="a"><button aria-label="Edge"><cad-icon name="edge"></cad-icon></button><button aria-label="视频"><cad-icon name="clap"></cad-icon></button><button class="on" aria-label="AutoCAD"><cad-icon name="acad"></cad-icon></button><button aria-label="画图"><cad-icon name="paint"></cad-icon></button></div>
<div class="t"><span class="p"><cad-icon name="chevup"></cad-icon></span><cad-icon name="battery"></cad-icon><cad-icon name="wifi"></cad-icon><cad-icon name="sound"></cad-icon><span class="z"><cad-icon name="sogou"></cad-icon></span><div class="k">20:58<br>2019/1/1</div></div>`);

define('brand-mark', e=>`<style>:host{display:block;width:184px;height:90px;opacity:.82;pointer-events:none}svg{display:block;width:184px;height:90px;overflow:visible}</style>
<svg viewBox="766 454 184 90"><g fill="#fff" stroke="#9a9a9a" stroke-width="1" paint-order="stroke"><text x="767" y="510" font-size="38" font-weight="700" font-family="Liberation Sans">Bai</text>
<ellipse cx="835" cy="477" rx="6.500" ry="8.500"/><ellipse cx="848" cy="465" rx="6" ry="8.500"/><ellipse cx="863" cy="466" rx="6.500" ry="8.500" transform="rotate(12 863 466)"/><ellipse cx="874" cy="481" rx="6" ry="8" transform="rotate(12 874 481)"/>
<path d="M854 478c9 0 11 10 18 15 9 8 5 18-4 18-5 0-8-1-14-1s-9 1-14 1c-9 0-12-10-4-18 7-5 9-15 18-15z"/>
<text x="882" y="508" font-size="30" font-weight="700" font-family="Noto Sans CJK SC">经验</text></g><text x="768" y="535" font-size="20" font-family="Noto Sans" font-weight="500" fill="#fff">jingyan.baidu.com</text><text x="839" y="506" font-size="22" font-family="Liberation Sans" font-weight="700" fill="#a8a8a8">du</text></svg>`);

define('red-arrow', e=>`<style>:host{display:block;width:362px;height:226px;pointer-events:none}svg{display:block;width:100%;height:100%}</style>
<svg viewBox="369 101 362 226"><path d="M728 104L372 324M388 303l-16 21 26-4" fill="none" stroke="#850f22" stroke-width="4" stroke-linecap="round" stroke-linejoin="round"/></svg>`);

define('cad-app', e=>`<style>:host{display:flex;flex-direction:column;height:100vh;position:relative}red-arrow{position:absolute;left:369px;top:101px;z-index:30}brand-mark{position:absolute;right:50px;bottom:18px;z-index:30}</style>
<app-header></app-header><tool-rows></tool-rows><work-space></work-space><command-line></command-line><status-bar></status-bar><task-bar></task-bar><red-arrow></red-arrow><brand-mark></brand-mark>`);
</script>
</body>
</html>
